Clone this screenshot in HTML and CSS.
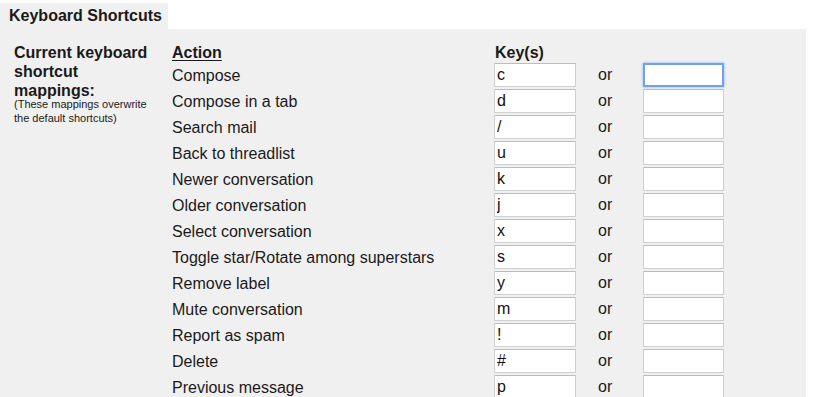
FILE: index.html
```html
<!DOCTYPE html>
<html lang="en">
<head>
  <meta charset="UTF-8" />
  <title>Keyboard Shortcuts</title>
  <link rel="stylesheet" href="styles.css">
</head>
<body>
  <div class="tab">Keyboard Shortcuts</div>

  <section class="panel">
    <aside class="intro">
      <h2 class="intro-title">Current keyboard shortcut mappings:</h2>
      <p class="intro-note">(These mappings overwrite the default shortcuts)</p>
    </aside>

    <div class="shortcuts">
      <div class="row row-head">
        <span class="col-action"><u>Action</u></span>
        <span class="col-key">Key(s)</span>
      </div>

      <div class="row">
        <span class="col-action">Compose</span>
        <input class="key" type="text" value="c">
        <span class="or">or</span>
        <input class="key key-alt is-focused" type="text" value="">
      </div>
      <div class="row">
        <span class="col-action">Compose in a tab</span>
        <input class="key" type="text" value="d">
        <span class="or">or</span>
        <input class="key key-alt" type="text" value="">
      </div>
      <div class="row">
        <span class="col-action">Search mail</span>
        <input class="key" type="text" value="/">
        <span class="or">or</span>
        <input class="key key-alt" type="text" value="">
      </div>
      <div class="row">
        <span class="col-action">Back to threadlist</span>
        <input class="key" type="text" value="u">
        <span class="or">or</span>
        <input class="key key-alt" type="text" value="">
      </div>
      <div class="row">
        <span class="col-action">Newer conversation</span>
        <input class="key" type="text" value="k">
        <span class="or">or</span>
        <input class="key key-alt" type="text" value="">
      </div>
      <div class="row">
        <span class="col-action">Older conversation</span>
        <input class="key" type="text" value="j">
        <span class="or">or</span>
        <input class="key key-alt" type="text" value="">
      </div>
      <div class="row">
        <span class="col-action">Select conversation</span>
        <input class="key" type="text" value="x">
        <span class="or">or</span>
        <input class="key key-alt" type="text" value="">
      </div>
      <div class="row">
        <span class="col-action">Toggle star/Rotate among superstars</span>
        <input class="key" type="text" value="s">
        <span class="or">or</span>
        <input class="key key-alt" type="text" value="">
      </div>
      <div class="row">
        <span class="col-action">Remove label</span>
        <input class="key" type="text" value="y">
        <span class="or">or</span>
        <input class="key key-alt" type="text" value="">
      </div>
      <div class="row">
        <span class="col-action">Mute conversation</span>
        <input class="key" type="text" value="m">
        <span class="or">or</span>
        <input class="key key-alt" type="text" value="">
      </div>
      <div class="row">
        <span class="col-action">Report as spam</span>
        <input class="key" type="text" value="!">
        <span class="or">or</span>
        <input class="key key-alt" type="text" value="">
      </div>
      <div class="row">
        <span class="col-action">Delete</span>
        <input class="key" type="text" value="#">
        <span class="or">or</span>
        <input class="key key-alt" type="text" value="">
      </div>
      <div class="row">
        <span class="col-action">Previous message</span>
        <input class="key" type="text" value="p">
        <span class="or">or</span>
        <input class="key key-alt" type="text" value="">
      </div>
    </div>
  </section>
</body>
</html>
```

FILE: styles.css
```css
/* Base */
body {
  margin: 0;
  padding-top: 3px;
  background: #fff;
  color: #1a1a1a;
  font-family: "Liberation Sans", Arial, sans-serif;
  font-size: 16px;
  overflow: hidden;
}

/* Tab */
.tab {
  display: inline-block;
  width: 159px;
  height: 26px;
  padding-left: 9px;
  background: #f1f0f0;
  font-weight: 700;
  line-height: 26px;
}

/* Panel */
.panel {
  display: flex;
  width: 806px;
  min-height: 400px;
  padding-top: 14px;
  background: #f1f0f0;
}

.intro {
  width: 158px;
  padding-left: 14px;
}

.intro-title {
  margin: 0;
  width: 140px;
  font-size: 16px;
  font-weight: 700;
  line-height: 19px;
}

.intro-note {
  margin: -3px 0 0;
  width: 140px;
  font-size: 11px;
  line-height: 14px;
}

/* Shortcut rows */
.shortcuts {
  display: flex;
  flex-direction: column;
}

.row {
  display: grid;
  grid-template-columns: 322px 82px 67px 81px;
  align-items: center;
  height: 26px;
}

.row-head {
  height: 20px;
  align-items: start;
  line-height: 19px;
  font-weight: 700;
}

.row-head u {
  text-decoration-thickness: 1px;
  text-underline-offset: 2px;
}

.col-key {
  padding-left: 1px;
}

.key {
  box-sizing: border-box;
  width: 82px;
  height: 24px;
  margin: 0 0 2px;
  padding: 0 2px;
  border: 1px solid #cfcfcf;
  border-top-color: #bdbdbd;
  border-radius: 0;
  background: #fff;
  color: #111;
  font-family: "Liberation Sans", Arial, sans-serif;
  font-size: 16px;
  outline: none;
}

.key-alt {
  width: 81px;
}

.is-focused {
  border: 2px solid #6ea2ea;
  box-shadow: 0 0 3px #8db8f2;
}

.or {
  padding-left: 22px;
  margin-bottom: 2px;
}
```
